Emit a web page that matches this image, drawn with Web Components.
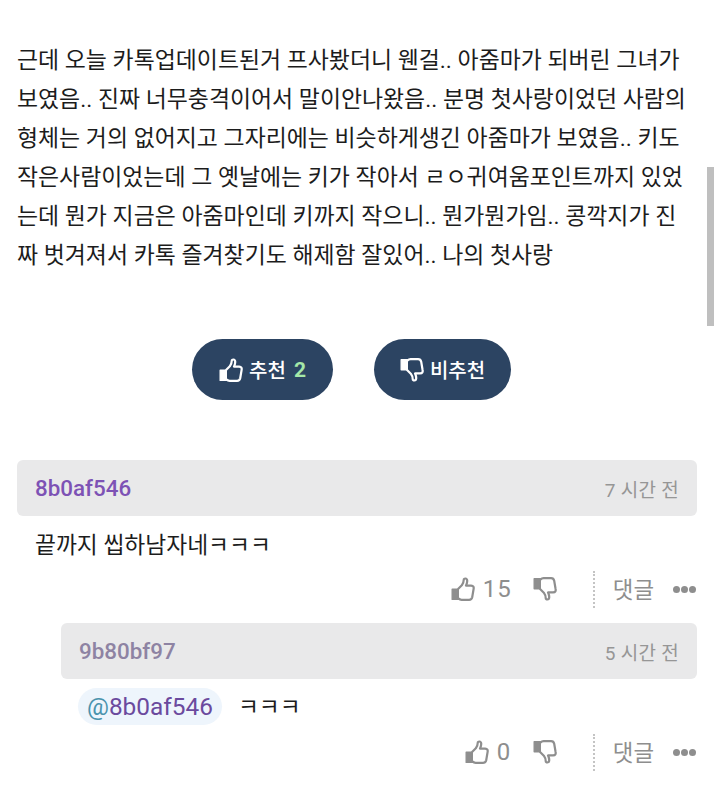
<!DOCTYPE html>
<html lang="ko">
  <head>
    <meta charset="utf-8" />
    <style>
      html, body { margin: 0; background: #fff; }
      body {
        width: 714px;
        height: 792px;
        overflow: hidden;
        position: relative;
        font-family: Roboto, "Noto Sans CJK KR", sans-serif;
      }
    </style>
    <script type="text/javascript">
      const THUMB = `<svg viewBox="0 0 24 24" width="24" height="24" fill="none" stroke="currentColor" stroke-width="2.2" stroke-linejoin="round" stroke-linecap="round">
        <path d="M7.3 11.8 L10.8 8.3 C12.3 6.3 12.7 4.6 12.7 2.9 C12.7 0.9 16 0.9 16.2 3.6 C16.4 5.6 15.6 7.2 15 8.6 L20.2 8.6 C22.4 8.6 23 10.2 22.6 12 L21.2 20.2 C20.8 22 19.6 22.8 18.1 22.8 L10.6 22.8 C9.2 22.8 8.2 22.2 7.3 21.4"/>
        <path d="M1.2 12.2 H7.3 V22.4 H1.2 Z" fill="currentColor" stroke-width="1.4"/>
      </svg>`;

      class ThumbIcon extends HTMLElement {
        connectedCallback() {
          if (this.shadowRoot) return;
          this.attachShadow({ mode: 'open' });
          const flip = this.hasAttribute('down') ? 'transform: scaleY(-1);' : '';
          this.shadowRoot.innerHTML = `<style>
            :host { display: inline-flex; flex: none; }
            svg { display: block; ${flip} }
          </style>${THUMB}`;
        }
      }
      customElements.define('thumb-icon', ThumbIcon);

      class PostBody extends HTMLElement {
        constructor() {
          super();
          this.attachShadow({ mode: 'open' });
          this.shadowRoot.innerHTML = `<style>
            :host {
              display: block;
              padding: 41px 17px 0;
              font-size: 22.9px;
              line-height: 39px;
              color: #1c1c1c;
              white-space: nowrap;
            }
          </style><slot></slot>`;
        }
      }
      customElements.define('post-body', PostBody);

      class VoteButton extends HTMLElement {
        constructor() {
          super();
          this.attachShadow({ mode: 'open' });
          this.shadowRoot.innerHTML = `<style>
            :host {
              display: inline-flex;
              align-items: center;
              justify-content: center;
              height: 61px;
              border-radius: 31px;
              background: #2c4462;
              color: #fff;
              font-size: 20px;
              font-weight: 500;
              gap: 6px;
            }
            ::slotted(b) { color: #a5e8a8; font-weight: 700; margin-left: 2px; font-size: 21px; }
          </style><slot></slot>`;
        }
      }
      customElements.define('vote-button', VoteButton);

      class VoteBar extends HTMLElement {
        constructor() {
          super();
          this.attachShadow({ mode: 'open' });
          this.shadowRoot.innerHTML = `<style>
            :host {
              display: flex;
              justify-content: center;
              gap: 41px;
              margin-top: 64px;
              padding-right: 11px;
            }
          </style><slot></slot>`;
        }
      }
      customElements.define('vote-bar', VoteBar);

      class CommentHead extends HTMLElement {
        constructor() {
          super();
          this.attachShadow({ mode: 'open' });
          this.shadowRoot.innerHTML = `<style>
            :host {
              display: flex;
              align-items: center;
              justify-content: space-between;
              height: 56px;
              padding: 0 18px;
              border-radius: 6px;
              background: #e9e9ea;
            }
            .name { font-size: 22.4px; font-weight: 500; color: var(--name-color, #7d52b5); }
            .time { font-size: 19px; color: #969696; letter-spacing: 0.3px; }
          </style>
          <span class="name"><slot name="name"></slot></span>
          <span class="time"><slot name="time"></slot></span>`;
        }
      }
      customElements.define('comment-head', CommentHead);

      class CommentActions extends HTMLElement {
        connectedCallback() {
          if (this.shadowRoot) return;
          this.attachShadow({ mode: 'open' });
          const likes = this.getAttribute('likes');
          const likesWidth = this.getAttribute('likes-width');
          this.shadowRoot.innerHTML = `<style>
            :host {
              display: flex;
              align-items: center;
              justify-content: flex-end;
              height: 38px;
              color: #8e8e8e;
              font-size: 24px;
              padding-right: 1px;
            }
            .likes { margin-left: 8px; width: ${likesWidth}px; letter-spacing: 1px; }
            .down { margin-left: 23px; }
            .sep { height: 37px; border-left: 2px dotted #c4c4c4; margin: 0 18px 0 36px; }
            .reply { font-size: 22.4px; margin-top: -2px; }
            .more { display: flex; gap: 1px; margin-left: 19px; }
            .more i { width: 7px; height: 7px; border-radius: 50%; background: #8e8e8e; }
          </style>
          <thumb-icon></thumb-icon>
          <span class="likes">${likes}</span>
          <thumb-icon class="down" down></thumb-icon>
          <span class="sep"></span>
          <span class="reply">댓글</span>
          <span class="more"><i></i><i></i><i></i></span>`;
        }
      }
      customElements.define('comment-actions', CommentActions);

      class CommentItem extends HTMLElement {
        constructor() {
          super();
          this.attachShadow({ mode: 'open' });
          this.shadowRoot.innerHTML = `<style>
            :host { display: block; margin: 0 17px; }
            :host([reply]) { margin-left: 61px; --name-color: #8e83a3; }
            .text {
              display: flex;
              align-items: center;
              font-size: 22.75px;
              color: #1c1c1c;
              height: 54px;
              padding-left: 18px;
            }
            :host([reply]) .text { padding-left: 17px; }
          </style>
          <slot name="head"></slot>
          <div class="text"><slot name="text"></slot></div>
          <slot name="actions"></slot>`;
        }
      }
      customElements.define('comment-item', CommentItem);

      class MentionTag extends HTMLElement {
        constructor() {
          super();
          this.attachShadow({ mode: 'open' });
          this.shadowRoot.innerHTML = `<style>
            :host {
              display: inline-flex;
              align-items: center;
              height: 37px;
              padding: 0 9px;
              margin-right: 16px;
              border-radius: 19px;
              background: #eef5fc;
              color: #6b4a9e;
              font-size: 24.4px;
            }
            span { color: #4a93ad; }
          </style><span>@</span><slot></slot>`;
        }
      }
      customElements.define('mention-tag', MentionTag);

      class PageScrollbar extends HTMLElement {
        constructor() {
          super();
          this.attachShadow({ mode: 'open' });
          this.shadowRoot.innerHTML = `<style>
            :host {
              display: block;
              position: absolute;
              right: 0;
              top: 167px;
              width: 7px;
              height: 159px;
              background: #bfbfbf;
            }
          </style>`;
        }
      }
      customElements.define('page-scrollbar', PageScrollbar);
    </script>
    <style>
      vote-button.up { width: 141px; }
      vote-button.down { width: 137px; }
      .comments { margin-top: 60px; }
      comment-item[reply] { margin-top: 15px; }
    </style>
  </head>
  <body>
    <post-body>근데 오늘 카톡업데이트된거 프사봤더니 웬걸.. 아줌마가 되버린 그녀가<br />보였음.. 진짜 너무충격이어서 말이안나왔음.. 분명 첫사랑이었던 사람의<br />형체는 거의 없어지고 그자리에는 비슷하게생긴 아줌마가 보였음.. 키도<br />작은사람이었는데 그 옛날에는 키가 작아서 ㄹㅇ귀여움포인트까지 있었<br />는데 뭔가 지금은 아줌마인데 키까지 작으니.. 뭔가뭔가임.. 콩깍지가 진<br />짜 벗겨져서 카톡 즐겨찾기도 해제함 잘있어.. 나의 첫사랑</post-body>

    <vote-bar>
      <vote-button class="up"><thumb-icon></thumb-icon>추천<b>2</b></vote-button>
      <vote-button class="down"><thumb-icon down></thumb-icon>비추천</vote-button>
    </vote-bar>

    <div class="comments">
      <comment-item>
        <comment-head slot="head"><span slot="name">8b0af546</span><span slot="time">7 시간 전</span></comment-head>
        <span slot="text">끝까지 씹하남자네ㅋㅋㅋ</span>
        <comment-actions slot="actions" likes="15" likes-width="27"></comment-actions>
      </comment-item>
      <comment-item reply>
        <comment-head slot="head"><span slot="name">9b80bf97</span><span slot="time">5 시간 전</span></comment-head>
        <span slot="text"><mention-tag>8b0af546</mention-tag>ㅋㅋㅋ</span>
        <comment-actions slot="actions" likes="0" likes-width="13"></comment-actions>
      </comment-item>
    </div>

    <page-scrollbar></page-scrollbar>
  </body>
</html>
